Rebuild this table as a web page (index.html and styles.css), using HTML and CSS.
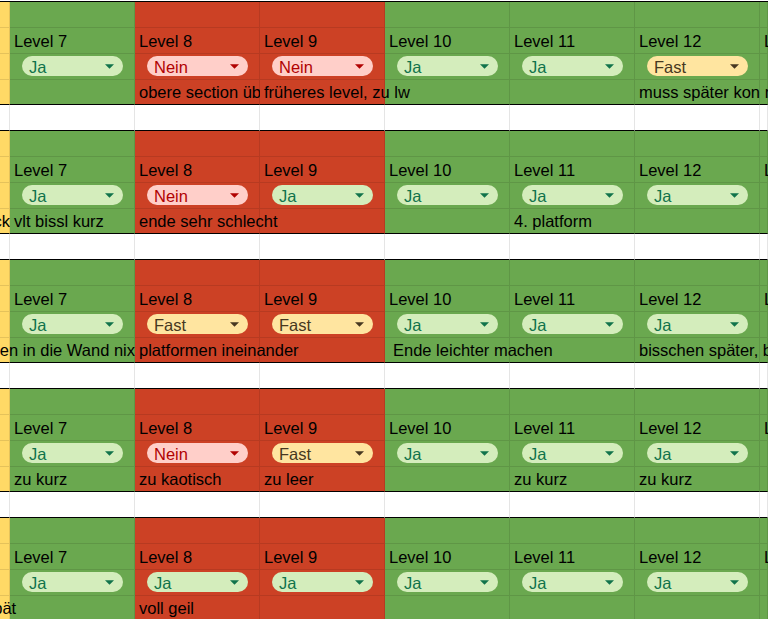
FILE: index.html
```html
<!DOCTYPE html>
<html lang="de">
<head>
<meta charset="utf-8">
<title>Level Feedback</title>
<link rel="stylesheet" href="styles.css">
</head>
<body>
<div class="sheet">
  <div class="lead"></div>

  <!-- Block 1 -->
  <div class="block">
    <div class="row r1">
      <div class="cell y"></div><div class="cell g"></div><div class="cell r"></div><div class="cell r"></div><div class="cell g"></div><div class="cell g"></div><div class="cell g"></div><div class="cell g"></div>
    </div>
    <div class="row r2">
      <div class="cell y"></div>
      <div class="cell g"><span class="lv">Level 7</span></div>
      <div class="cell r"><span class="lv">Level 8</span></div>
      <div class="cell r"><span class="lv">Level 9</span></div>
      <div class="cell g"><span class="lv">Level 10</span></div>
      <div class="cell g"><span class="lv">Level 11</span></div>
      <div class="cell g"><span class="lv">Level 12</span></div>
      <div class="cell g"><span class="lv">Level 13</span></div>
    </div>
    <div class="row r3">
      <div class="cell y"></div>
      <div class="cell g"><span class="chip ja"><span class="lbl">Ja</span><svg class="caret" viewBox="0 0 10 5"><path d="M0 0h10L5 5z"/></svg></span></div>
      <div class="cell r"><span class="chip nein"><span class="lbl">Nein</span><svg class="caret" viewBox="0 0 10 5"><path d="M0 0h10L5 5z"/></svg></span></div>
      <div class="cell r"><span class="chip nein"><span class="lbl">Nein</span><svg class="caret" viewBox="0 0 10 5"><path d="M0 0h10L5 5z"/></svg></span></div>
      <div class="cell g"><span class="chip ja"><span class="lbl">Ja</span><svg class="caret" viewBox="0 0 10 5"><path d="M0 0h10L5 5z"/></svg></span></div>
      <div class="cell g"><span class="chip ja"><span class="lbl">Ja</span><svg class="caret" viewBox="0 0 10 5"><path d="M0 0h10L5 5z"/></svg></span></div>
      <div class="cell g"><span class="chip fast"><span class="lbl">Fast</span><svg class="caret" viewBox="0 0 10 5"><path d="M0 0h10L5 5z"/></svg></span></div>
      <div class="cell g"></div>
    </div>
    <div class="row r4">
      <div class="cell y k1"></div><div class="cell g k2"></div><div class="cell r k3"></div><div class="cell r k4"></div><div class="cell g k5"></div><div class="cell g k6"></div><div class="cell g k7"></div><div class="cell g k8"></div>
      <div class="note s3">obere section überarbeiten</div>
      <div class="note s4-6">früheres level, zu lw</div>
      <div class="note s7-9">muss später kon mehr</div>
    </div>
    <div class="row r5">
      <div class="cell w"></div><div class="cell w"></div><div class="cell w"></div><div class="cell w"></div><div class="cell w"></div><div class="cell w"></div><div class="cell w"></div><div class="cell w"></div>
    </div>
  </div>

  <!-- Block 2 -->
  <div class="block">
    <div class="row r1">
      <div class="cell y"></div><div class="cell g"></div><div class="cell r"></div><div class="cell r"></div><div class="cell g"></div><div class="cell g"></div><div class="cell g"></div><div class="cell g"></div>
    </div>
    <div class="row r2">
      <div class="cell y"></div>
      <div class="cell g"><span class="lv">Level 7</span></div>
      <div class="cell r"><span class="lv">Level 8</span></div>
      <div class="cell r"><span class="lv">Level 9</span></div>
      <div class="cell g"><span class="lv">Level 10</span></div>
      <div class="cell g"><span class="lv">Level 11</span></div>
      <div class="cell g"><span class="lv">Level 12</span></div>
      <div class="cell g"><span class="lv">Level 13</span></div>
    </div>
    <div class="row r3">
      <div class="cell y"></div>
      <div class="cell g"><span class="chip ja"><span class="lbl">Ja</span><svg class="caret" viewBox="0 0 10 5"><path d="M0 0h10L5 5z"/></svg></span></div>
      <div class="cell r"><span class="chip nein"><span class="lbl">Nein</span><svg class="caret" viewBox="0 0 10 5"><path d="M0 0h10L5 5z"/></svg></span></div>
      <div class="cell r"><span class="chip ja"><span class="lbl">Ja</span><svg class="caret" viewBox="0 0 10 5"><path d="M0 0h10L5 5z"/></svg></span></div>
      <div class="cell g"><span class="chip ja"><span class="lbl">Ja</span><svg class="caret" viewBox="0 0 10 5"><path d="M0 0h10L5 5z"/></svg></span></div>
      <div class="cell g"><span class="chip ja"><span class="lbl">Ja</span><svg class="caret" viewBox="0 0 10 5"><path d="M0 0h10L5 5z"/></svg></span></div>
      <div class="cell g"><span class="chip ja"><span class="lbl">Ja</span><svg class="caret" viewBox="0 0 10 5"><path d="M0 0h10L5 5z"/></svg></span></div>
      <div class="cell g"></div>
    </div>
    <div class="row r4">
      <div class="cell y k1"></div><div class="cell g k2"></div><div class="cell r k3"></div><div class="cell r k4"></div><div class="cell g k5"></div><div class="cell g k6"></div><div class="cell g k7"></div><div class="cell g k8"></div>
      <div class="note s1 end"><span>zu wenig Check</span></div>
      <div class="note s2">vlt bissl kurz</div>
      <div class="note s3-5">ende sehr schlecht</div>
      <div class="note s6-8">4. platform</div>
    </div>
    <div class="row r5">
      <div class="cell w"></div><div class="cell w"></div><div class="cell w"></div><div class="cell w"></div><div class="cell w"></div><div class="cell w"></div><div class="cell w"></div><div class="cell w"></div>
    </div>
  </div>

  <!-- Block 3 -->
  <div class="block">
    <div class="row r1">
      <div class="cell y"></div><div class="cell g"></div><div class="cell r"></div><div class="cell r"></div><div class="cell g"></div><div class="cell g"></div><div class="cell g"></div><div class="cell g"></div>
    </div>
    <div class="row r2">
      <div class="cell y"></div>
      <div class="cell g"><span class="lv">Level 7</span></div>
      <div class="cell r"><span class="lv">Level 8</span></div>
      <div class="cell r"><span class="lv">Level 9</span></div>
      <div class="cell g"><span class="lv">Level 10</span></div>
      <div class="cell g"><span class="lv">Level 11</span></div>
      <div class="cell g"><span class="lv">Level 12</span></div>
      <div class="cell g"><span class="lv">Level 13</span></div>
    </div>
    <div class="row r3">
      <div class="cell y"></div>
      <div class="cell g"><span class="chip ja"><span class="lbl">Ja</span><svg class="caret" viewBox="0 0 10 5"><path d="M0 0h10L5 5z"/></svg></span></div>
      <div class="cell r"><span class="chip fast"><span class="lbl">Fast</span><svg class="caret" viewBox="0 0 10 5"><path d="M0 0h10L5 5z"/></svg></span></div>
      <div class="cell r"><span class="chip fast"><span class="lbl">Fast</span><svg class="caret" viewBox="0 0 10 5"><path d="M0 0h10L5 5z"/></svg></span></div>
      <div class="cell g"><span class="chip ja"><span class="lbl">Ja</span><svg class="caret" viewBox="0 0 10 5"><path d="M0 0h10L5 5z"/></svg></span></div>
      <div class="cell g"><span class="chip ja"><span class="lbl">Ja</span><svg class="caret" viewBox="0 0 10 5"><path d="M0 0h10L5 5z"/></svg></span></div>
      <div class="cell g"><span class="chip ja"><span class="lbl">Ja</span><svg class="caret" viewBox="0 0 10 5"><path d="M0 0h10L5 5z"/></svg></span></div>
      <div class="cell g"></div>
    </div>
    <div class="row r4">
      <div class="cell y k1"></div><div class="cell g k2"></div><div class="cell r k3"></div><div class="cell r k4"></div><div class="cell g k5"></div><div class="cell g k6"></div><div class="cell g k7"></div><div class="cell g k8"></div>
      <div class="note s1-3 end"><span>mit Pfeilen in die Wand nix</span></div>
      <div class="note s3-5">platformen ineinander</div>
      <div class="note s5-7 sp">Ende leichter machen</div>
      <div class="note s7-9">bisschen später, bitte</div>
    </div>
    <div class="row r5">
      <div class="cell w"></div><div class="cell w"></div><div class="cell w"></div><div class="cell w"></div><div class="cell w"></div><div class="cell w"></div><div class="cell w"></div><div class="cell w"></div>
    </div>
  </div>

  <!-- Block 4 -->
  <div class="block">
    <div class="row r1">
      <div class="cell y"></div><div class="cell g"></div><div class="cell r"></div><div class="cell r"></div><div class="cell g"></div><div class="cell g"></div><div class="cell g"></div><div class="cell g"></div>
    </div>
    <div class="row r2">
      <div class="cell y"></div>
      <div class="cell g"><span class="lv">Level 7</span></div>
      <div class="cell r"><span class="lv">Level 8</span></div>
      <div class="cell r"><span class="lv">Level 9</span></div>
      <div class="cell g"><span class="lv">Level 10</span></div>
      <div class="cell g"><span class="lv">Level 11</span></div>
      <div class="cell g"><span class="lv">Level 12</span></div>
      <div class="cell g"><span class="lv">Level 13</span></div>
    </div>
    <div class="row r3">
      <div class="cell y"></div>
      <div class="cell g"><span class="chip ja"><span class="lbl">Ja</span><svg class="caret" viewBox="0 0 10 5"><path d="M0 0h10L5 5z"/></svg></span></div>
      <div class="cell r"><span class="chip nein"><span class="lbl">Nein</span><svg class="caret" viewBox="0 0 10 5"><path d="M0 0h10L5 5z"/></svg></span></div>
      <div class="cell r"><span class="chip fast"><span class="lbl">Fast</span><svg class="caret" viewBox="0 0 10 5"><path d="M0 0h10L5 5z"/></svg></span></div>
      <div class="cell g"><span class="chip ja"><span class="lbl">Ja</span><svg class="caret" viewBox="0 0 10 5"><path d="M0 0h10L5 5z"/></svg></span></div>
      <div class="cell g"><span class="chip ja"><span class="lbl">Ja</span><svg class="caret" viewBox="0 0 10 5"><path d="M0 0h10L5 5z"/></svg></span></div>
      <div class="cell g"><span class="chip ja"><span class="lbl">Ja</span><svg class="caret" viewBox="0 0 10 5"><path d="M0 0h10L5 5z"/></svg></span></div>
      <div class="cell g"></div>
    </div>
    <div class="row r4">
      <div class="cell y k1"></div><div class="cell g k2"></div><div class="cell r k3"></div><div class="cell r k4"></div><div class="cell g k5"></div><div class="cell g k6"></div><div class="cell g k7"></div><div class="cell g k8"></div>
      <div class="note s2">zu kurz</div>
      <div class="note s3">zu kaotisch</div>
      <div class="note s4">zu leer</div>
      <div class="note s6">zu kurz</div>
      <div class="note s7">zu kurz</div>
    </div>
    <div class="row r5">
      <div class="cell w"></div><div class="cell w"></div><div class="cell w"></div><div class="cell w"></div><div class="cell w"></div><div class="cell w"></div><div class="cell w"></div><div class="cell w"></div>
    </div>
  </div>

  <!-- Block 5 -->
  <div class="block">
    <div class="row r1">
      <div class="cell y"></div><div class="cell g"></div><div class="cell r"></div><div class="cell r"></div><div class="cell g"></div><div class="cell g"></div><div class="cell g"></div><div class="cell g"></div>
    </div>
    <div class="row r2">
      <div class="cell y"></div>
      <div class="cell g"><span class="lv">Level 7</span></div>
      <div class="cell r"><span class="lv">Level 8</span></div>
      <div class="cell r"><span class="lv">Level 9</span></div>
      <div class="cell g"><span class="lv">Level 10</span></div>
      <div class="cell g"><span class="lv">Level 11</span></div>
      <div class="cell g"><span class="lv">Level 12</span></div>
      <div class="cell g"><span class="lv">Level 13</span></div>
    </div>
    <div class="row r3">
      <div class="cell y"></div>
      <div class="cell g"><span class="chip ja"><span class="lbl">Ja</span><svg class="caret" viewBox="0 0 10 5"><path d="M0 0h10L5 5z"/></svg></span></div>
      <div class="cell r"><span class="chip ja"><span class="lbl">Ja</span><svg class="caret" viewBox="0 0 10 5"><path d="M0 0h10L5 5z"/></svg></span></div>
      <div class="cell r"><span class="chip ja"><span class="lbl">Ja</span><svg class="caret" viewBox="0 0 10 5"><path d="M0 0h10L5 5z"/></svg></span></div>
      <div class="cell g"><span class="chip ja"><span class="lbl">Ja</span><svg class="caret" viewBox="0 0 10 5"><path d="M0 0h10L5 5z"/></svg></span></div>
      <div class="cell g"><span class="chip ja"><span class="lbl">Ja</span><svg class="caret" viewBox="0 0 10 5"><path d="M0 0h10L5 5z"/></svg></span></div>
      <div class="cell g"><span class="chip ja"><span class="lbl">Ja</span><svg class="caret" viewBox="0 0 10 5"><path d="M0 0h10L5 5z"/></svg></span></div>
      <div class="cell g"></div>
    </div>
    <div class="row r4">
      <div class="cell y k1"></div><div class="cell g k2"></div><div class="cell r k3"></div><div class="cell r k4"></div><div class="cell g k5"></div><div class="cell g k6"></div><div class="cell g k7"></div><div class="cell g k8"></div>
      <div class="note s1-3 cut">spät</div>
      <div class="note s3">voll geil</div>
    </div>
    <div class="row r5">
      <div class="cell w"></div><div class="cell w"></div><div class="cell w"></div><div class="cell w"></div><div class="cell w"></div><div class="cell w"></div><div class="cell w"></div><div class="cell w"></div>
    </div>
  </div>
</div>
</body>
</html>
```

FILE: styles.css
```css
html, body {
  margin: 0;
  padding: 0;
  background: #ffffff;
}

body {
  width: 768px;
  height: 619px;
  overflow: hidden;
  font-family: "Liberation Sans", Arial, sans-serif;
  font-size: 16.5px;
  color: #000000;
}

.sheet {
  display: flex;
  flex-direction: column;
}

.lead {
  height: 1px;
  border-bottom: 1px solid #000000;
}

.block {
  display: flex;
  flex-direction: column;
}

.row {
  display: grid;
  grid-template-columns: 10px repeat(6, 125px) 1fr;
}

.cell {
  box-sizing: border-box;
  height: 26px;
  border-right: 1px solid rgba(0, 0, 0, 0.1);
  border-bottom: 1px solid rgba(0, 0, 0, 0.1);
  min-width: 0;
}

.r4 .cell {
  height: 25px;
  border-bottom: 1px solid #000000;
}

.r5 .cell {
  height: 26px;
  border-bottom: 1px solid #000000;
}

.y { background: #ffd966; }
.g { background: #6aa84f; }
.r { background: #cc4125; }
.w { background: #ffffff; }

.lv {
  display: block;
  padding-left: 4px;
  padding-top: 1px;
  line-height: 24px;
  white-space: nowrap;
}

.chip {
  display: flex;
  align-items: center;
  justify-content: space-between;
  box-sizing: border-box;
  width: 101px;
  height: 20px;
  margin: 2px 0 0 12px;
  padding: 0 9px 0 7px;
  border-radius: 10px;
  line-height: 20px;
  white-space: nowrap;
}

.lbl {
  padding-top: 2px;
}

.caret {
  width: 9px;
  height: 5px;
  fill: currentColor;
}

.ja { background: #d4edbc; color: #11734b; }
.nein { background: #ffcfc9; color: #b10202; }
.fast { background: #ffe5a0; color: #473821; }

/* fixed columns for the comment row, so notes can overlap cells */
.k1 { grid-row: 1; grid-column: 1; }
.k2 { grid-row: 1; grid-column: 2; }
.k3 { grid-row: 1; grid-column: 3; }
.k4 { grid-row: 1; grid-column: 4; }
.k5 { grid-row: 1; grid-column: 5; }
.k6 { grid-row: 1; grid-column: 6; }
.k7 { grid-row: 1; grid-column: 7; }
.k8 { grid-row: 1; grid-column: 8; }

.note {
  grid-row: 1;
  height: 24px;
  line-height: 24px;
  padding-left: 4px;
  overflow: hidden;
  white-space: nowrap;
  min-width: 0;
}

.note.end {
  display: flex;
  justify-content: flex-end;
  padding-left: 0;
}

.note.sp { padding-left: 8px; }

.note.cut {
  padding-left: 0;
  text-indent: -15px;
}

.s1 { grid-column: 1 / 2; }
.s1-3 { grid-column: 1 / 3; }
.s2 { grid-column: 2 / 3; }
.s3 { grid-column: 3 / 4; }
.s3-5 { grid-column: 3 / 5; }
.s4 { grid-column: 4 / 5; }
.s4-6 { grid-column: 4 / 6; }
.s5-7 { grid-column: 5 / 7; }
.s6 { grid-column: 6 / 7; }
.s6-8 { grid-column: 6 / 8; }
.s7 { grid-column: 7 / 8; }
.s7-9 { grid-column: 7 / 9; }
```
